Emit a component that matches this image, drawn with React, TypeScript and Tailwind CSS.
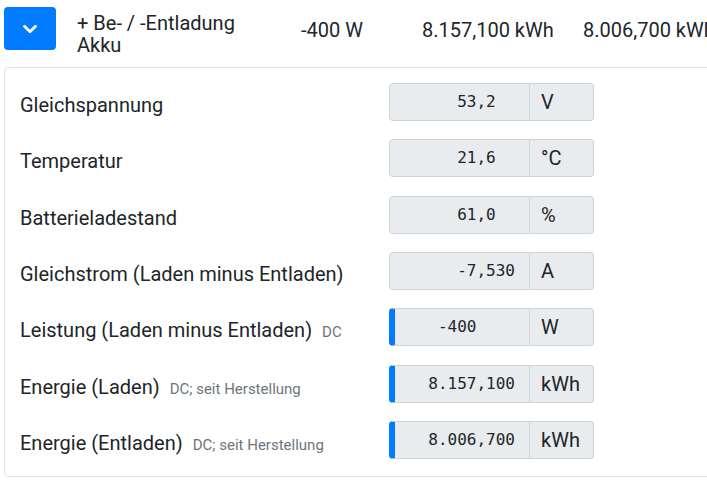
import {ChevronDown} from "lucide-react";

type Row = {
  label: string;
  hint?: string;
  value: string;
  unit: string;
  marked?: boolean;
};

// values are padded with spaces so the decimal commas line up
const rows: Row[] = [
  {label: "Gleichspannung", value: "53,2  ", unit: "V"},
  {label: "Temperatur", value: "21,6  ", unit: "°C"},
  {label: "Batterieladestand", value: "61,0  ", unit: "%"},
  {label: "Gleichstrom (Laden minus Entladen)", value: "-7,530", unit: "A"},
  {label: "Leistung (Laden minus Entladen)", hint: "DC", value: "-400    ", unit: "W", marked: true},
  {label: "Energie (Laden)", hint: "DC; seit Herstellung", value: "8.157,100", unit: "kWh", marked: true},
  {label: "Energie (Entladen)", hint: "DC; seit Herstellung", value: "8.006,700", unit: "kWh", marked: true},
];

const ValueRow = ({row}: {row: Row}) => {
  return (
    <div className="flex items-start h-[38px]">
      <div className="w-[369px] shrink-0 flex items-baseline pt-[10px] leading-[24px]">
        <span className="text-[20px]">{row.label}</span>
        {row.hint && <span className="ml-[10px] text-[15px] text-[#6c757d]">{row.hint}</span>}
      </div>
      <div className="flex h-[38px] w-[205px] shrink-0">
        <div
          className={`w-[141px] h-full flex items-center justify-end pr-[14px] bg-[#e9ecef] border border-[#ced4da] rounded-l-[4px] ${
            row.marked ? "border-l-[6px] border-l-[#007bff]" : ""
          }`}
        >
          <span className="whitespace-pre text-[16px] text-[#212529]" style={{fontFamily: '"DejaVu Sans Mono", monospace'}}>
            {row.value}
          </span>
        </div>
        <div className="flex-1 h-full flex items-center pl-[11px] bg-[#e9ecef] border border-l-0 border-[#ced4da] rounded-r-[4px] text-[20px]">
          {row.unit}
        </div>
      </div>
    </div>
  );
};

export default function App() {
  return (
    <div className="w-[707px] h-[480px] overflow-hidden bg-white text-[#212529]" style={{fontFamily: 'Roboto, sans-serif'}}>
      {/* summary line */}
      <div className="flex items-start h-[60px] pl-[4px] pt-[7px] whitespace-nowrap text-[20px] leading-[22px]">
        <button className="w-[52px] h-[43px] rounded-[4px] bg-[#007bff] flex items-center justify-center shrink-0">
          <ChevronDown className="text-white" size={22} strokeWidth={3} />
        </button>
        <div className="ml-[21px] w-[224px] pt-[5px] shrink-0">
          <div>+ Be- / -Entladung</div>
          <div>Akku</div>
        </div>
        <div className="w-[121px] pt-[12px] shrink-0">-400 W</div>
        <div className="w-[161px] pt-[12px] shrink-0">8.157,100 kWh</div>
        <div className="pt-[12px] shrink-0">8.006,700 kWh</div>
      </div>

      {/* details card */}
      <div className="mt-[7px] ml-[4px] w-[720px] border border-[#dee2e6] rounded-[5px] px-[15px] pt-[15px] pb-[17px] flex flex-col gap-[18.33px]">
        {rows.map((row) => (
          <ValueRow key={row.label} row={row} />
        ))}
      </div>
    </div>
  );
}
